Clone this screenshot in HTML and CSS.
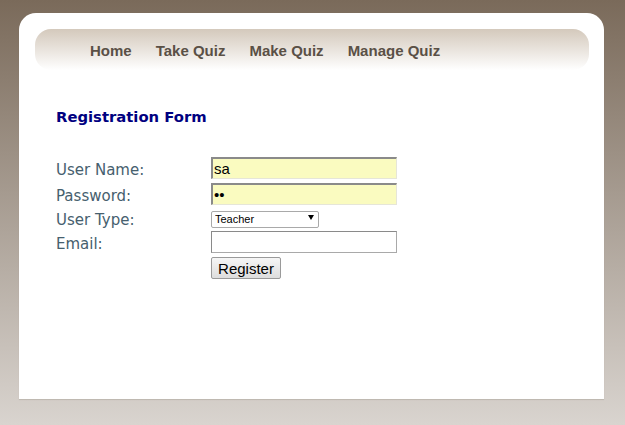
FILE: index.html
```html
<!DOCTYPE html>
<html>
<head>
<meta charset="utf-8">
<link rel="stylesheet" href="styles.css">
</head>
<body>
<div class="page">
  <div class="card">
    <nav class="nav">
      <a class="nav-item" href="#">Home</a>
      <a class="nav-item" href="#">Take Quiz</a>
      <a class="nav-item" href="#">Make Quiz</a>
      <a class="nav-item" href="#">Manage Quiz</a>
    </nav>
    <div class="content">
      <h2 class="title">Registration Form</h2>
      <form class="form">
        <label class="label">User Name:</label>
        <input class="field filled" type="text" value="sa">
        <label class="label">Password:</label>
        <input class="field filled" type="password" value="sa">
        <label class="label">User Type:</label>
        <div class="select-wrap">
          <select class="select"><option>Teacher</option><option>Student</option></select>
          <span class="arrow"></span>
        </div>
        <label class="label">Email:</label>
        <input class="field" type="text" value="">
        <span></span>
        <button class="btn" type="button">Register</button>
      </form>
    </div>
  </div>
</div>
</body>
</html>
```

FILE: styles.css
```css
html, body {
  margin: 0;
  padding: 0;
}
body {
  width: 625px;
  height: 425px;
  overflow: hidden;
  background: linear-gradient(to bottom, #7a6a5a 0%, #a59a8f 45%, #d9d4cf 100%);
}
.page {
  padding: 13px 0 0 19px;
}
.card {
  width: 585px;
  height: 386px;
  background: #fff;
  border-radius: 17px 17px 0 0;
  box-shadow: 0 1px 1px rgba(120, 110, 100, 0.25);
  padding: 16px 15px 0 16px;
  box-sizing: border-box;
}
.nav {
  height: 41px;
  border-radius: 16px;
  background: linear-gradient(to bottom, #d4c9bc 0%, #ebe6e0 55%, #ffffff 100%);
  display: flex;
  align-items: center;
  gap: 24px;
  padding: 0 0 0 55px;
}
.nav-item {
  font-family: "Liberation Sans", Arial, sans-serif;
  font-weight: bold;
  font-size: 15px;
  color: #5a5046;
  text-decoration: none;
  padding-top: 1px;
}
.content {
  padding: 38px 0 0 21px;
}
.title {
  margin: 0;
  font-family: "DejaVu Sans", Verdana, sans-serif;
  font-weight: bold;
  font-size: 14.8px;
  line-height: 18px;
  color: #000080;
}
.form {
  margin-top: 31px;
  display: grid;
  grid-template-columns: 155px auto;
  row-gap: 4px;
  align-items: center;
  justify-items: start;
}
.label {
  font-family: "DejaVu Sans", Verdana, sans-serif;
  font-size: 15px;
  line-height: 14px;
  color: #46606e;
  padding-top: 4px;
}
.field {
  width: 186px;
  height: 22px;
  box-sizing: border-box;
  border: 1px solid #a9a9a9;
  border-top-color: #8a8a8a;
  border-left-color: #8a8a8a;
  background: #fff;
  font-family: "Liberation Sans", Arial, sans-serif;
  font-size: 15px;
  padding: 0 1px;
  margin: 0;
  color: #000;
}
.filled {
  background: #fafbc0;
  border-color: #e6e6d8;
  border-top: 2px solid #8a8a8a;
  border-left: 2px solid #8a8a8a;
}
.select-wrap {
  position: relative;
  width: 108px;
  height: 18px;
}
.select {
  -webkit-appearance: none;
  appearance: none;
  width: 108px;
  height: 17px;
  box-sizing: border-box;
  margin: 0;
  font-family: "Liberation Sans", Arial, sans-serif;
  font-size: 11px;
  border: 1px solid #a9a9a9;
  border-radius: 2px;
  background: #fff;
  padding: 0 0 0 3px;
  color: #000;
}
.arrow {
  position: absolute;
  right: 5px;
  top: 6px;
  width: 0;
  height: 0;
  border-left: 3px solid transparent;
  border-right: 3px solid transparent;
  border-top: 5px solid #000;
  pointer-events: none;
}
.btn {
  width: 70px;
  height: 22px;
  margin: 0;
  padding: 0;
  font-family: "Liberation Sans", Arial, sans-serif;
  font-size: 15px;
  color: #000;
  background: linear-gradient(to bottom, #f6f6f6, #dddddd);
  border: 1px solid #9a9a9a;
  border-radius: 2px;
}
```
